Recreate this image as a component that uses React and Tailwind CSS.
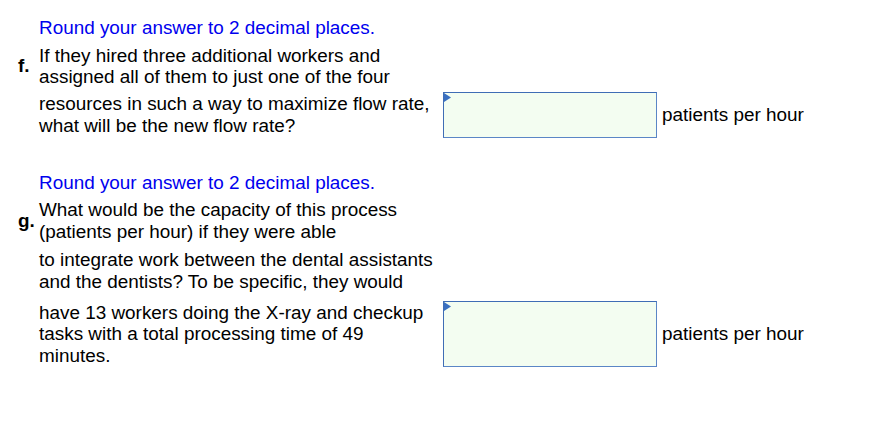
import React from 'react';

function AnswerBox({ h }) {
  return (
    <div className={`relative w-[214px] ${h} border border-[#5a86c6] border-t-[#3f6db5] border-l-[#3f6db5] bg-[#f3fdf1]`}>
      <svg className="absolute left-0 top-0" width="8" height="9" viewBox="0 0 8 9">
        <polygon points="0,0 7,4.5 0,9" fill="#3a6fc0" />
      </svg>
    </div>
  );
}

function Row({ label, children, box, boxH, className = '' }) {
  return (
    <div className={`grid grid-cols-[39px_404px_214px_auto] items-center ${className}`}>
      <div className="pl-[18px] font-bold">{label}</div>
      <div>{children}</div>
      <div>{box && <AnswerBox h={boxH} />}</div>
      <div className="pl-[5px]">{box && 'patients per hour'}</div>
    </div>
  );
}

export default function App() {
  return (
    <div className="w-[880px] h-[424px] bg-white text-black text-[18.9px] leading-[21.5px] pt-[17px]" style={{ fontFamily: '"Liberation Sans", Arial, sans-serif' }}>
      <Row>
        <span className="text-[#0000ee]">Round your answer to 2 decimal places.</span>
      </Row>
      <Row label="f." className="mt-[6px]">
        If they hired three additional workers and<br />assigned all of them to just one of the four
      </Row>
      <Row box boxH="h-[46px]" className="mt-[4px]">
        resources in such a way to maximize flow rate,<br />what will be the new flow rate?
      </Row>

      <Row className="mt-[34px]">
        <span className="text-[#0000ee]">Round your answer to 2 decimal places.</span>
      </Row>
      <Row label="g." className="mt-[6px]">
        What would be the capacity of this process<br />(patients per hour) if they were able
      </Row>
      <Row className="mt-[7px]">
        to integrate work between the dental assistants<br />and the dentists? To be specific, they would
      </Row>
      <Row box boxH="h-[66px]" className="mt-[9px]">
        have 13 workers doing the X-ray and checkup<br />tasks with a total processing time of 49<br />minutes.
      </Row>
    </div>
  );
}
